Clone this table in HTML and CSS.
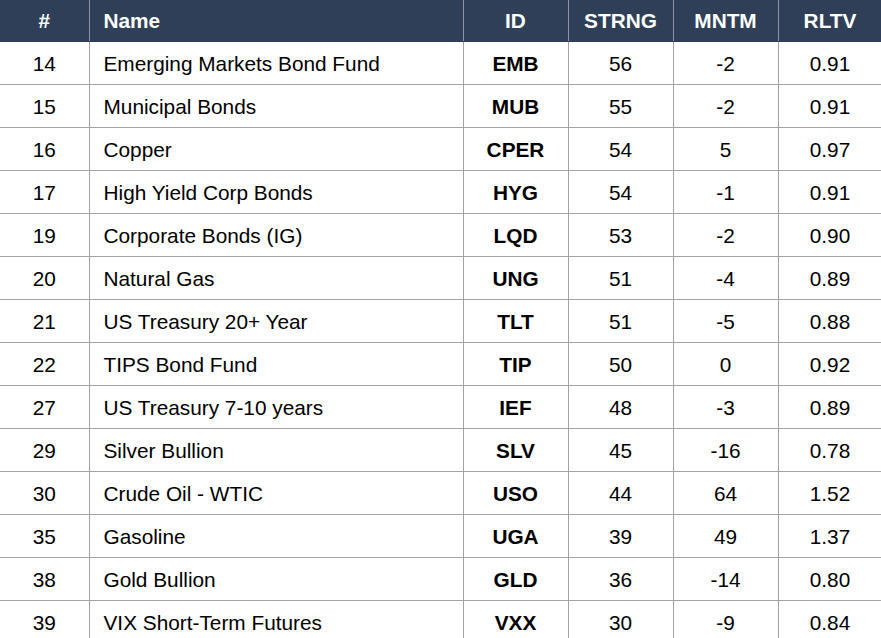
FILE: index.html
```html
<!DOCTYPE html>
<html>
<head>
<meta charset="utf-8">
<link rel="stylesheet" href="styles.css">
</head>
<body>
<table class="grid">
  <colgroup>
    <col class="c-rank"><col class="c-name"><col class="c-id"><col class="c-num"><col class="c-num"><col class="c-last">
  </colgroup>
  <thead>
    <tr><th>#</th><th class="left">Name</th><th>ID</th><th>STRNG</th><th>MNTM</th><th>RLTV</th></tr>
  </thead>
  <tbody>
    <tr><td>14</td><td class="left">Emerging Markets Bond Fund</td><td class="id">EMB</td><td>56</td><td>-2</td><td>0.91</td></tr>
    <tr><td>15</td><td class="left">Municipal Bonds</td><td class="id">MUB</td><td>55</td><td>-2</td><td>0.91</td></tr>
    <tr><td>16</td><td class="left">Copper</td><td class="id">CPER</td><td>54</td><td>5</td><td>0.97</td></tr>
    <tr><td>17</td><td class="left">High Yield Corp Bonds</td><td class="id">HYG</td><td>54</td><td>-1</td><td>0.91</td></tr>
    <tr><td>19</td><td class="left">Corporate Bonds (IG)</td><td class="id">LQD</td><td>53</td><td>-2</td><td>0.90</td></tr>
    <tr><td>20</td><td class="left">Natural Gas</td><td class="id">UNG</td><td>51</td><td>-4</td><td>0.89</td></tr>
    <tr><td>21</td><td class="left">US Treasury 20+ Year</td><td class="id">TLT</td><td>51</td><td>-5</td><td>0.88</td></tr>
    <tr><td>22</td><td class="left">TIPS Bond Fund</td><td class="id">TIP</td><td>50</td><td>0</td><td>0.92</td></tr>
    <tr><td>27</td><td class="left">US Treasury 7-10 years</td><td class="id">IEF</td><td>48</td><td>-3</td><td>0.89</td></tr>
    <tr><td>29</td><td class="left">Silver Bullion</td><td class="id">SLV</td><td>45</td><td>-16</td><td>0.78</td></tr>
    <tr><td>30</td><td class="left">Crude Oil - WTIC</td><td class="id">USO</td><td>44</td><td>64</td><td>1.52</td></tr>
    <tr><td>35</td><td class="left">Gasoline</td><td class="id">UGA</td><td>39</td><td>49</td><td>1.37</td></tr>
    <tr><td>38</td><td class="left">Gold Bullion</td><td class="id">GLD</td><td>36</td><td>-14</td><td>0.80</td></tr>
    <tr><td>39</td><td class="left">VIX Short-Term Futures</td><td class="id">VXX</td><td>30</td><td>-9</td><td>0.84</td></tr>
  </tbody>
</table>
</body>
</html>
```

FILE: styles.css
```css
html, body {
  margin: 0;
  padding: 0;
  background: #ffffff;
}
body {
  font-family: "Liberation Sans", Arial, sans-serif;
  overflow: hidden;
}
.grid {
  border-collapse: collapse;
  table-layout: fixed;
  width: 882px;
  font-size: 20.8px;
  color: #000000;
}
.c-rank { width: 89px; }
.c-name { width: 374px; }
.c-id { width: 105px; }
.c-num { width: 105px; }
.c-last { width: 104px; }
.grid th,
.grid td {
  padding: 0;
  text-align: center;
  vertical-align: middle;
  border-right: 1px solid #a3a3a3;
  white-space: nowrap;
  overflow: hidden;
}
.grid th {
  height: 41px;
  background: #2f3f58;
  color: #ffffff;
  font-weight: bold;
  border-bottom: 1px solid #2f3f58;
  border-right-color: #8c96a4;
}
.grid td {
  height: 41px;
  padding-top: 1px;
  border-bottom: 1px solid #a3a3a3;
}
.grid .left {
  text-align: left;
  padding-left: 14px;
}
.grid .id {
  font-weight: bold;
}
```
